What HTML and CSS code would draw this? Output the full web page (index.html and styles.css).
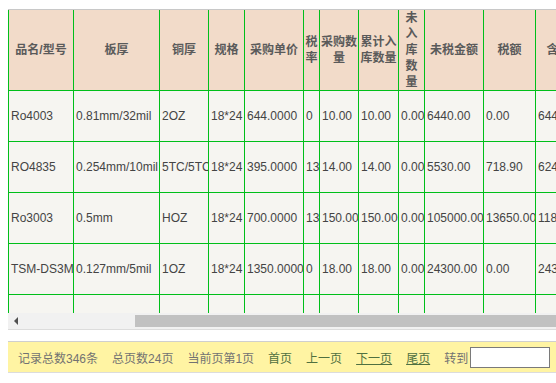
FILE: index.html
```html
<!DOCTYPE html>
<html>
<head>
<meta charset="utf-8">
<link rel="stylesheet" href="styles.css">
</head>
<body>
<div class="grid-box">
  <div class="grid-scroll">
    <table class="grid">
      <colgroup>
        <col class="w1"><col class="w2"><col class="w3"><col class="w4"><col class="w5"><col class="w6"><col class="w7"><col class="w8"><col class="w9"><col class="w10"><col class="w11"><col class="w12">
      </colgroup>
      <thead>
        <tr>
          <th>品名/型号</th><th>板厚</th><th>铜厚</th><th>规格</th><th>采购单价</th><th>税率</th><th>采购数量</th><th>累计入库数量</th><th class="narrow">未入库数量</th><th>未税金额</th><th>税额</th><th>含税金额</th>
        </tr>
      </thead>
      <tbody>
        <tr><td>Ro4003</td><td>0.81mm/32mil</td><td>2OZ</td><td>18*24</td><td>644.0000</td><td>0</td><td>10.00</td><td>10.00</td><td>0.00</td><td>6440.00</td><td>0.00</td><td>6440.00</td></tr>
        <tr><td>RO4835</td><td>0.254mm/10mil</td><td>5TC/5TC</td><td>18*24</td><td>395.0000</td><td>13</td><td>14.00</td><td>14.00</td><td>0.00</td><td>5530.00</td><td>718.90</td><td>6248.90</td></tr>
        <tr><td>Ro3003</td><td>0.5mm</td><td>HOZ</td><td>18*24</td><td>700.0000</td><td>13</td><td>150.00</td><td>150.00</td><td>0.00</td><td>105000.00</td><td>13650.00</td><td>118650.00</td></tr>
        <tr><td>TSM-DS3M</td><td>0.127mm/5mil</td><td>1OZ</td><td>18*24</td><td>1350.0000</td><td>0</td><td>18.00</td><td>18.00</td><td>0.00</td><td>24300.00</td><td>0.00</td><td>24300.00</td></tr>
        <tr><td></td><td></td><td></td><td></td><td></td><td></td><td></td><td></td><td></td><td></td><td></td><td></td></tr>
      </tbody>
    </table>
  </div>
  <div class="hscroll"><span class="arrow"></span><span class="thumb"></span></div>
</div>
<div class="pager">
  <span class="info">记录总数346条</span>
  <span class="info">总页数24页</span>
  <span class="info">当前页第1页</span>
  <a class="link">首页</a>
  <a class="link">上一页</a>
  <a class="link ul">下一页</a>
  <a class="link ul">尾页</a>
  <span class="goto">转到<input class="goto-input" type="text"></span>
</div>
</body>
</html>
```

FILE: styles.css
```css
html, body {
  margin: 0;
  padding: 0;
}
body {
  padding-top: 9px;
  font-family: "Liberation Sans", "Noto Sans CJK SC", sans-serif;
  font-size: 12px;
  overflow: hidden;
  background: #fff;
}
.grid-box {
  margin-left: 8px;
  border-top: 1px solid #c8c8c8;
  border-bottom: 1px solid #dcdcdc;
}
.grid-scroll {
  height: 303px;
  overflow: hidden;
}
.grid {
  border-collapse: collapse;
  table-layout: fixed;
  width: 598px;
}
.w1 { width: 65px; }
.w2 { width: 86px; }
.w3 { width: 49px; }
.w4 { width: 36px; }
.w5 { width: 59px; }
.w6 { width: 16px; }
.w7 { width: 39px; }
.w8 { width: 40px; }
.w9 { width: 26px; }
.w10 { width: 59px; }
.w11 { width: 52px; }
.w12 { width: 70px; }
.grid th {
  background: #f2dbc9;
  color: #5a5a5a;
  font-weight: bold;
  height: 80px;
  line-height: 16px;
  padding: 0;
  text-align: center;
  vertical-align: middle;
  border: 1px solid #00bf1a;
  border-top: none;
  overflow: hidden;
}
.grid th.narrow {
  padding: 0 2px;
}
.grid td {
  background: #f6f5f1;
  color: #444;
  height: 50px;
  padding: 0 1px 0 2px;
  border: 1px solid #00bf1a;
  white-space: nowrap;
  overflow: hidden;
  vertical-align: middle;
}
.hscroll {
  height: 16px;
  background: #f1f1f1;
  display: flex;
  align-items: center;
}
.arrow {
  width: 0;
  height: 0;
  margin-left: 6px;
  border-top: 4px solid transparent;
  border-bottom: 4px solid transparent;
  border-right: 4px solid #505050;
}
.thumb {
  flex: 1;
  height: 12px;
  margin-left: 117px;
  background: #c1c1c1;
}
.pager {
  margin: 11px 0 0 8px;
  height: 30px;
  border-top: 1px solid #cfcfcf;
  border-bottom: 1px solid #dcdcdc;
  background: #fff4a3;
  display: flex;
  align-items: center;
  gap: 14px;
  padding-left: 10px;
  color: #727272;
}
.link {
  color: #4f7040;
  text-decoration: none;
}
.link.ul {
  text-decoration: underline;
}
.goto {
  display: flex;
  align-items: center;
  gap: 2px;
}
.goto-input {
  width: 80px;
  height: 21px;
  box-sizing: border-box;
  border: 1px solid #7a7a7a;
  padding: 0;
  margin: 0;
  background: #fff;
}
```
